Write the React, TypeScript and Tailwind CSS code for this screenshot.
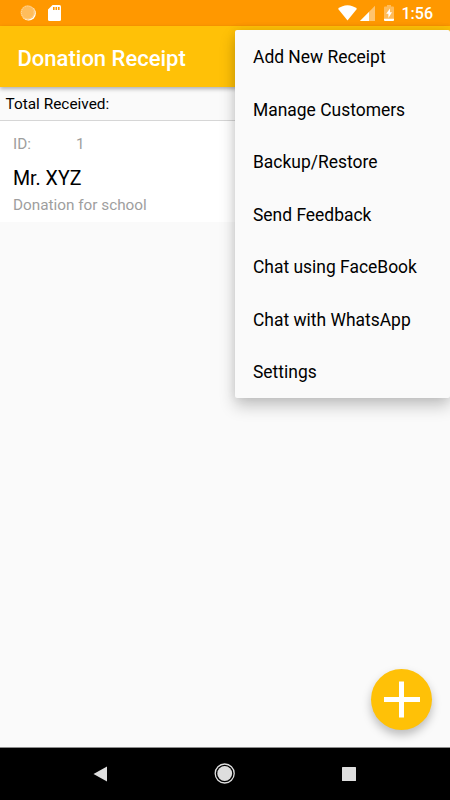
const menuItems = [
  "Add New Receipt",
  "Manage Customers",
  "Backup/Restore",
  "Send Feedback",
  "Chat using FaceBook",
  "Chat with WhatsApp",
  "Settings"
];

function StatusBar() {
  return (
    <div className="flex h-[26px] shrink-0 items-center justify-between bg-[#ff9800] pl-5 pr-[17px] text-white">
      <div className="flex items-center gap-3">
        <svg width="16" height="16" viewBox="0 0 16 16" fill="none">
          <circle cx="8.6" cy="8.4" r="7.2" fill="#fff" />
          <circle cx="7.7" cy="7.5" r="7.2" fill="#ffbd5c" />
          <circle cx="7.7" cy="7.5" r="6.3" stroke="#ffdca8" strokeWidth="1" strokeDasharray="1 1.2" />
        </svg>
        <svg width="13" height="16" viewBox="0 0 13 16">
          <path d="M4.6 0H11.5Q13 0 13 1.5V14.5Q13 16 11.5 16H1.5Q0 16 0 14.5V4.6Z" fill="#fff" />
          <path d="M5 2h1.6v3H5zM7.5 2h1.6v3H7.5zM10 2h1.6v3H10z" fill="#ff9800" />
        </svg>
      </div>
      <div className="flex items-center">
        <svg width="19" height="16" viewBox="0 0 19 16">
          <path d="M9.5 15.6L0 3.8Q4.2 0.2 9.5 0.2T19 3.8Z" fill="#fff" />
        </svg>
        <svg className="ml-[3px]" width="15" height="16" viewBox="0 0 15 16">
          <path d="M15 0.8V16H0Z" fill="#ffc46e" />
          <path d="M9 6.9V16H0Z" fill="#fff" />
        </svg>
        <svg className="ml-[9px]" width="10" height="16" viewBox="0 0 10 16">
          <path d="M3 0H7V1.6H9Q10 1.6 10 2.6V13H0V2.6Q0 1.6 1 1.6H3Z" fill="#ffbc5b" />
          <path d="M0 13.4H10V15Q10 16 9 16H1Q0 16 0 15Z" fill="#fff" />
          <path d="M6 3.4L2.2 8.8H4.4V13L8 7.2H6Z" fill="#fff" />
        </svg>
        <span className="ml-2 mt-[2px] text-[16px] leading-4 font-medium">1:56</span>
      </div>
    </div>
  );
}

function ReceiptCard() {
  return (
    <div className="h-[101px] bg-white pl-[13px] pt-[13px] text-[#9e9e9e]">
      <div className="flex text-[15.3px] leading-5">
        <span className="w-[63px]">ID:</span>
        <span>1</span>
      </div>
      <p className="mt-[13px] text-[19.6px] leading-6 text-black">Mr. XYZ</p>
      <p className="mt-[4px] text-[15.3px] leading-5">Donation for school</p>
    </div>
  );
}

function OverflowMenu() {
  return (
    <ul className="absolute right-0 top-[30px] z-20 w-[215px] rounded-[2px] bg-[#fafafa] shadow-[0_8px_16px_rgba(0,0,0,0.22),0_0_10px_rgba(0,0,0,0.08)]">
      {menuItems.map((item) => (
        <li key={item} className="flex h-[52.5px] items-center pl-[18px] pt-[2.4px] text-[17.45px] text-black">
          {item}
        </li>
      ))}
    </ul>
  );
}

function NavigationBar() {
  return (
    <nav className="flex h-[53px] shrink-0 items-center justify-between border-t border-[#8c8c8c] bg-black pl-[93px] pr-[94px]">
      <svg width="14" height="16" viewBox="0 0 14 16">
        <path d="M14 0.5V15.5L0.5 8Z" fill="#dedede" />
      </svg>
      <svg width="22" height="22" viewBox="0 0 22 22">
        <circle cx="10.7" cy="10.5" r="9.5" fill="none" stroke="#dedede" strokeWidth="1.3" />
        <circle cx="10.7" cy="10.5" r="7.4" fill="#dedede" />
      </svg>
      <svg width="14" height="14" viewBox="0 0 14 14">
        <rect width="14" height="14" rx="0.5" fill="#dedede" />
      </svg>
    </nav>
  );
}

export default function App() {
  return (
    <div className="relative flex h-[800px] w-[450px] flex-col overflow-hidden bg-[#fafafa] font-[Roboto,sans-serif]">
      <StatusBar />
      <header className="relative z-10 flex h-[61px] shrink-0 items-center bg-[#ffc107] pl-[17.5px] pt-[4px] shadow-[0_2px_4px_rgba(0,0,0,0.3)]">
        <h1 className="text-[22px] font-medium text-white">Donation Receipt</h1>
      </header>
      <main className="flex-1">
        <div className="flex h-[34px] items-center border-b border-[#d6d6d6] pl-[5.5px] pt-[2px] text-[15.4px] text-black">
          Total Received:
        </div>
        <ReceiptCard />
      </main>
      <NavigationBar />
      <OverflowMenu />
      <button
        aria-label="Add receipt"
        className="absolute bottom-[70px] right-[18px] flex size-[61px] items-center justify-center rounded-full bg-[#ffc107] shadow-[0_5px_10px_rgba(0,0,0,0.25)]"
      >
        <svg width="37" height="37" viewBox="0 0 37 37">
          <path d="M1 18.5H37M18.5 0.5V36.5" stroke="#fff" strokeWidth="5" />
        </svg>
      </button>
    </div>
  );
}
